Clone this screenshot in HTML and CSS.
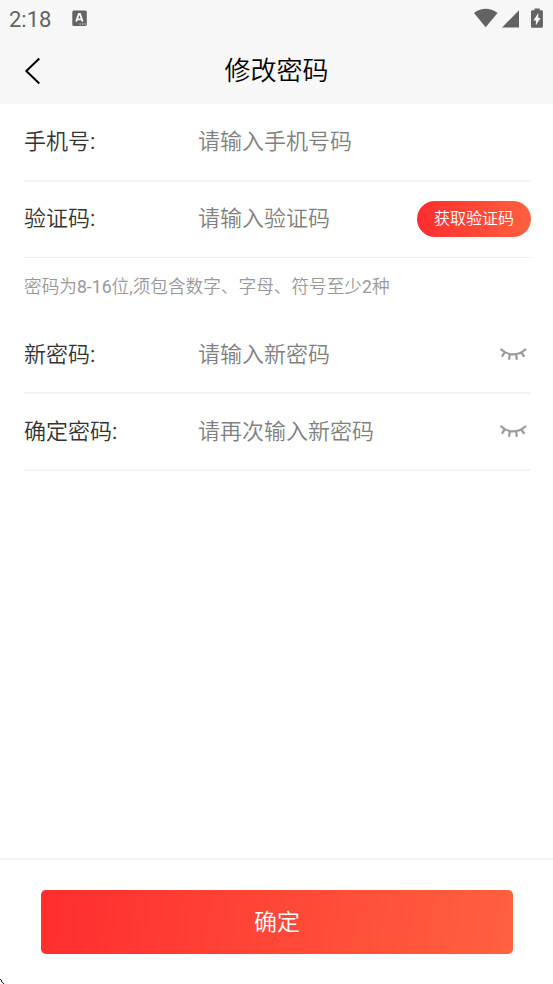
FILE: index.html
```html
<!DOCTYPE html>
<html lang="zh-CN">
<head>
<meta charset="utf-8">
<title>修改密码</title>
<link rel="stylesheet" href="styles.css">
</head>
<body>
<div class="page">
  <div class="statusbar">
    <span class="clock">2:18</span>
    <svg class="notice" width="16" height="17" viewBox="0 0 16 17"><rect x="0.3" y="0.5" width="14.5" height="15.5" rx="1.5" fill="#636363"/><path d="M4.1 11.6 6.8 4h1.2l2.7 7.6M5.1 9.4h4.6" fill="none" stroke="#f7f7f7" stroke-width="1.8"/><path d="M7.5 14h1.2M10 14h1.2M12.4 14h1.2" stroke="#f7f7f7" stroke-width="1.1"/></svg>
    <svg class="signals" width="71" height="22" viewBox="0 0 71 22"><path d="M0 5Q11.7-3.3 23.5 5L11.7 19.2Z" fill="#636363"/><path d="M28 19.5 45 2.2V19.5Z" fill="#636363"/><path d="M60.5 0.4h5.2v1.8h2a1.2 1.2 0 0 1 1.2 1.2v15.2a1.2 1.2 0 0 1-1.2 1.2h-9.5a1.2 1.2 0 0 1-1.2-1.2V3.4a1.2 1.2 0 0 1 1.2-1.2h2.3Z" fill="#636363"/><path d="M64.3 5v5h2.3L61.9 17.3v-4.9h-2.5Z" fill="#f7f7f7"/></svg>
  </div>
  <header class="navbar">
    <svg class="back" width="18" height="28" viewBox="0 0 18 28"><path d="M15.3 1.5 2.3 14l13 12.5" fill="none" stroke="#000" stroke-width="2"/></svg>
    <h1 class="title">修改密码</h1>
  </header>
  <form class="form">
    <label class="row upper"><span class="label">手机号<span class="latin">:</span></span><input class="field" type="text" placeholder="请输入手机号码"></label>
    <div class="row upper thin"><span class="label">验证码<span class="latin">:</span></span><input class="field" type="text" placeholder="请输入验证码"><button class="code" type="button">获取验证码</button></div>
    <p class="hint">密码为<span class="latin">8-16</span>位<span class="latin">,</span>须包含数字、字母、符号至少<span class="latin">2</span>种</p>
    <label class="row"><span class="label">新密码<span class="latin">:</span></span><input class="field" type="password" placeholder="请输入新密码"><svg class="eye" width="28" height="14" viewBox="0 0 28 14"><path d="M2.2 2.5Q7.5 7.4 14.2 7.4T26.3 2.5M5.5 5.6 3.4 9M10.8 7.4 10.2 11.9M17.2 7.4 17.7 11.9M22.3 5.6 24.8 9" fill="none" stroke="#999" stroke-width="2.2" stroke-linecap="round"/></svg></label>
    <label class="row"><span class="label">确定密码<span class="latin">:</span></span><input class="field" type="password" placeholder="请再次输入新密码"><svg class="eye" width="28" height="14" viewBox="0 0 28 14"><path d="M2.2 2.5Q7.5 7.4 14.2 7.4T26.3 2.5M5.5 5.6 3.4 9M10.8 7.4 10.2 11.9M17.2 7.4 17.7 11.9M22.3 5.6 24.8 9" fill="none" stroke="#999" stroke-width="2.2" stroke-linecap="round"/></svg></label>
  </form>
  <footer class="footer"><button class="submit" type="button">确定</button></footer>
  <svg class="cursor" width="5" height="5" viewBox="0 0 5 5" shape-rendering="crispEdges"><path d="M0 0h1v1H0ZM1 1h1v1H1ZM2 3h1v1H2ZM3 4h1v1H3ZM1 2h1v1H1Z" fill="#111"/></svg>
</div>
</body>
</html>
```
FILE: styles.css
```css
* { box-sizing: border-box; }
body {
  margin: 0;
  background: #fff;
  font-family: Roboto, "Noto Sans CJK SC", sans-serif;
  font-weight: 350;
}
.latin { font-weight: 400; }
.page {
  position: relative;
  display: flex;
  flex-direction: column;
  height: 984px;
  overflow: hidden;
}
.statusbar {
  display: flex;
  align-items: flex-start;
  height: 38px;
  padding: 8px 8px 0 9px;
  background: #f7f7f7;
  color: #636363;
}
.clock {
  width: 63px;
  font-size: 22px;
  font-weight: 400;
  line-height: 24px;
}
.notice { margin-top: 2px; }
.signals { margin-left: auto; }
.navbar {
  display: grid;
  grid-template-columns: 60px 1fr 60px;
  align-items: center;
  height: 66px;
  background: #f7f7f7;
}
.back { margin-left: 24px; }
.title {
  margin: 0;
  text-align: center;
  font-size: 26px;
  font-weight: 350;
  line-height: 38px;
  color: #000;
}
.form {
  flex: 1;
  padding: 1px 22px 0 24px;
}
.row {
  display: flex;
  align-items: center;
  height: 77px;
  padding-bottom: 1px;
  border-bottom: 2px solid #f3f3f3;
}
.row.thin {
  height: 76px;
  padding-bottom: 1px;
  border-bottom: 1px solid #efefef;
}
.label {
  width: 174px;
  padding-bottom: 4px;
  font-size: 22px;
  color: #333;
}
.upper .label { padding-bottom: 6px; }
.field {
  flex: 1;
  min-width: 0;
  height: 40px;
  padding: 0;
  border: 0;
  outline: 0;
  background: none;
  font: inherit;
  font-size: 22px;
}
.upper .field { padding-bottom: 2px; }
.field::placeholder { color: #808080; }
.code {
  width: 114px;
  height: 36px;
  padding: 0 0 4px;
  border: 0;
  border-radius: 18px;
  background: linear-gradient(90deg, #ff2d2f, #ff613f);
  color: #fff;
  font: inherit;
  font-size: 16px;
}
.hint {
  margin: 0;
  height: 59px;
  font-size: 17.65px;
  line-height: 58px;
  color: #999;
}
.eye { margin-right: 4px; }
.footer {
  height: 126px;
  padding: 30px 40px 0 41px;
  border-top: 2px solid #f3f3f3;
}
.submit {
  display: block;
  width: 100%;
  height: 64px;
  padding: 0 0 5px;
  border: 0;
  border-radius: 5px;
  background: linear-gradient(100deg, #ff2d2f, #ff613f);
  color: #fff;
  font: inherit;
  font-size: 23px;
}
.cursor {
  position: absolute;
  left: 0;
  bottom: 0;
}
```
